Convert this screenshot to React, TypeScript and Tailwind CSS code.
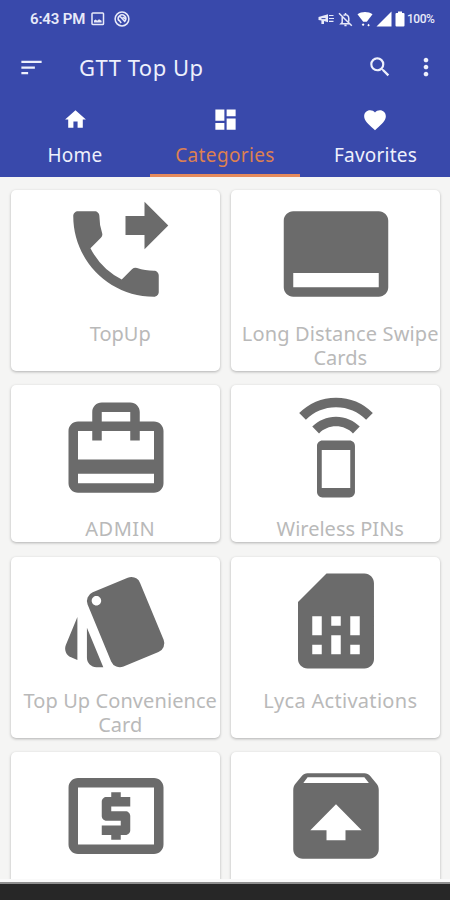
import type { ComponentType } from 'react';
import {
  MdCallToAction,
  MdCardTravel,
  MdDashboard,
  MdFavorite,
  MdHome,
  MdLocalAtm,
  MdMoreVert,
  MdPhoneForwarded,
  MdSearch,
  MdSimCard,
  MdSort,
  MdSpeakerPhone,
  MdStyle,
} from 'react-icons/md';

interface Category {
  icon: ComponentType<{ className?: string }>;
  lines: { text: string; className: string }[];
}

interface Row {
  className: string;
  items: Category[];
}

// Box with an open lid and an arrow going out of it
function UnarchiveIcon({ className }: { className?: string }) {
  return (
    <svg className={className} viewBox="0 0 24 24" fill="currentColor">
      <path d="M20.55 5.22l-1.39-1.68C18.88 3.21 18.47 3 18 3H6c-.47 0-.88.21-1.15.55L3.46 5.22C3.17 5.57 3 6.01 3 6.5V19c0 1.100.89 2 2 2h14c1.100 0 2-.9 2-2V6.500c0-.49-.17-.93-.45-1.280zM12 9.500l5.400 5.500H14v2.100h-4V15H6.600L12 9.500zM5.120 5.050l.9-1.200h11.950l.95 1.200H5.120z" />
    </svg>
  );
}

const rows: Row[] = [
  {
    className: 'h-[181px] mb-[14.5px]',
    items: [
      { icon: MdPhoneForwarded, lines: [{ text: 'TopUp', className: '' }] },
      {
        icon: MdCallToAction,
        lines: [
          { text: 'Long Distance Swipe', className: 'tracking-[0.15px]' },
          { text: 'Cards', className: '' },
        ],
      },
    ],
  },
  {
    className: 'h-[157px] mb-[14.5px]',
    items: [
      { icon: MdCardTravel, lines: [{ text: 'ADMIN', className: 'tracking-[0.5px]' }] },
      { icon: MdSpeakerPhone, lines: [{ text: 'Wireless PINs', className: '' }] },
    ],
  },
  {
    className: 'h-[181px] mb-[14px]',
    items: [
      {
        icon: MdStyle,
        lines: [
          { text: 'Top Up Convenience', className: 'tracking-[0.08px]' },
          { text: 'Card', className: '' },
        ],
      },
      { icon: MdSimCard, lines: [{ text: 'Lyca Activations', className: 'tracking-[0.3px]' }] },
    ],
  },
  {
    className: 'h-[181px]',
    items: [
      { icon: MdLocalAtm, lines: [] },
      { icon: UnarchiveIcon, lines: [] },
    ],
  },
];

function StatusBar() {
  return (
    <div className="flex h-[38px] items-center pl-[30px] pr-[17px] font-['Roboto',sans-serif] text-[#e8eaf9]">
      <span className="w-[55px] whitespace-nowrap text-[15px] font-semibold leading-none tracking-[-0.15px]">6:43 PM</span>
      <svg className="ml-[6px] h-[14px] w-[14px]" viewBox="0 0 14 14" fill="none" stroke="currentColor" strokeWidth="1.5">
        <rect x="1" y="1" width="11.5" height="11.5" rx="0.8" />
        <path d="M3 10.500v-2l1.600-1 1.600 1.200 1.800-1.500 2.600 1.500v1.800z" fill="currentColor" stroke="none" />
      </svg>
      <svg className="ml-[9px] h-4 w-4" viewBox="0 0 16 16" fill="none" stroke="currentColor" strokeWidth="1.5">
        <circle cx="8" cy="8" r="6.9" />
        <path d="M4.800 9.800a3.800 3.800 0 1 1 6.400 0M6.200 5.600l5 5.300M8.600 6.200l2.600 1.600M5 9l2.200 3" />
      </svg>
      <div className="ml-auto flex items-center">
        <svg className="h-[14px] w-[17px]" viewBox="0 0 17 14" fill="currentColor">
          <path d="M0.500 5L10 2.200v8L6 9v3H3.400V8.600L0.500 8z" />
          <path d="M11 3.500h4.500M11 6.500h5M11 9.300h4.500" stroke="currentColor" strokeWidth="1.2" />
          <path d="M3.500 6.600h4" stroke="#3949ab" strokeWidth="1" />
        </svg>
        <svg className="ml-[3px] h-[15px] w-[15px]" viewBox="0 0 15 15" fill="none" stroke="currentColor" strokeWidth="1.5">
          <path d="M4.200 5v5.500L3 11.700h9M5.500 3.400C8 1.800 10.800 3.400 10.800 6.200v3.200M7.500 1v2M6.400 13.500h2.200M1 1.200l12.800 12.600" />
        </svg>
        <svg className="ml-[4px] h-[17px] w-[16px] text-white" viewBox="0 0 17 17" fill="currentColor">
          <path d="M0.500 3C5-.2 12-.2 16.500 3L10.400 11H6.600z" />
          <path d="M5 14l1.500-1.500L8 14l-1.500 1.500zM11 14.500l1.300-1.500 1.300 1.500-1.300 1.500z" />
        </svg>
        <svg className="ml-[3px] h-[16px] w-[16px] text-white" viewBox="0 0 16 16" fill="currentColor">
          <path d="M15.500 0.500v15H0.500z" />
        </svg>
        <svg className="ml-[3px] h-[16px] w-[10px] text-white" viewBox="0 0 10 16" fill="currentColor">
          <path d="M3 0.500h4V2h1.500q1 0 1 1v11.500q0 1-1 1h-7q-1 0-1-1V3q0-1 1-1H3z" />
        </svg>
        <span className="ml-[2px] w-[26px] whitespace-nowrap text-[12px] font-medium leading-none tracking-[-0.5px]">100%</span>
      </div>
    </div>
  );
}

function Header() {
  return (
    <header className="h-[177px] shrink-0 bg-[#3949ab] text-[#eef0fc]">
      <StatusBar />
      <div className="flex h-[58px] items-center pl-[18px] pr-[10px]">
        <MdSort className="h-[27px] w-[27px]" />
        <h1 className="ml-[34px] whitespace-nowrap text-[22px] leading-none tracking-[0.5px]">GTT Top Up</h1>
        <MdSearch className="ml-auto h-[26px] w-[26px]" />
        <MdMoreVert className="ml-[19px] h-[28px] w-[28px]" />
      </div>
      <nav className="grid h-[81px] grid-cols-3">
        <div className="flex flex-col items-center pt-[11px]">
          <MdHome className="h-[25px] w-[25px] text-white" />
          <span className="mt-[11px] text-[19px] leading-6 tracking-[0.2px]">Home</span>
        </div>
        <div className="flex flex-col items-center border-b-[3px] border-[#e58a5c] pt-[10px]">
          <MdDashboard className="h-[27px] w-[27px] text-white" />
          <span className="mt-[10px] text-[19px] leading-6 tracking-[0.35px] text-[#dd8052]">Categories</span>
        </div>
        <div className="flex flex-col items-center pt-[11px]">
          <MdFavorite className="h-[26px] w-[26px] text-white" />
          <span className="mt-[10px] pl-px text-[19px] leading-6 tracking-[0.2px]">Favorites</span>
        </div>
      </nav>
    </header>
  );
}

function CategoryCard({ icon: Icon, lines }: Category) {
  return (
    <div className="flex flex-col items-center rounded-[5px] bg-white pt-[7.500px] shadow-[0_1px_3px_rgba(0,0,0,0.28)]">
      <div className="pl-[1.500px]">
        <Icon className="h-[114px] w-[114px] shrink-0 text-[#6b6b6b]" />
      </div>
      <div className="mt-[10.500px] flex flex-col items-center pl-[10px] text-[20px] leading-6 text-[#b9b9b9]">
        {lines.map((line) => (
          <span key={line.text} className={`whitespace-nowrap ${line.className}`}>
            {line.text}
          </span>
        ))}
      </div>
    </div>
  );
}

export default function App() {
  return (
    <div className="flex h-[900px] w-[450px] flex-col overflow-hidden bg-[#f5f5f4] font-['Noto_Sans',sans-serif]">
      <Header />
      <main className="h-[702px] shrink-0 overflow-hidden pl-[10.5px] pr-[10px] pt-[12.5px]">
        {rows.map((row, i) => (
          <div key={i} className={`grid grid-cols-2 gap-[10.5px] ${row.className}`}>
            {row.items.map((item, j) => (
              <CategoryCard key={j} {...item} />
            ))}
          </div>
        ))}
      </main>
      <div className="h-[5px] shrink-0 border-b-2 border-[#8f8f8f] bg-[#fafafa]" />
      <div className="flex-1 bg-[#272727]" />
    </div>
  );
}
